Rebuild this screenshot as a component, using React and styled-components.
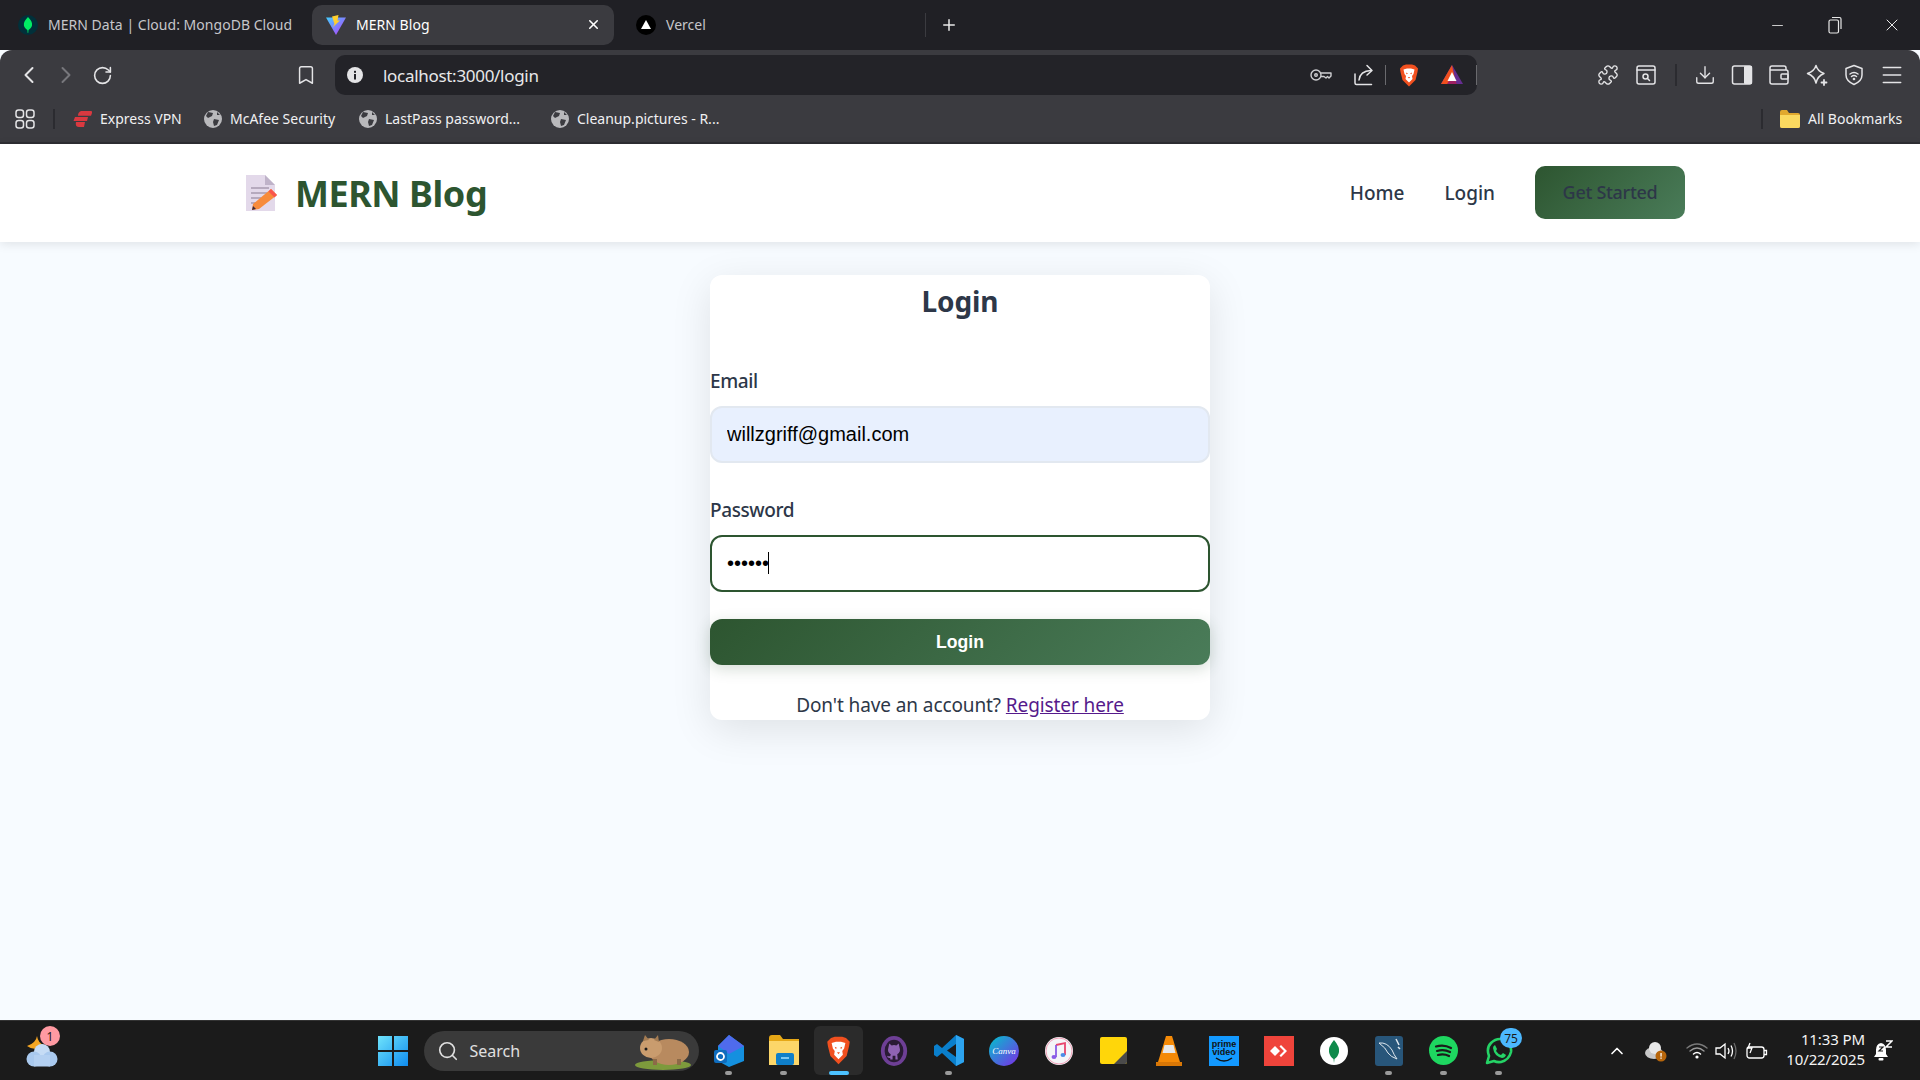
import React from "react";
import styled, { createGlobalStyle } from "styled-components";
import {
  ChevronLeft,
  ChevronRight,
  RotateCw,
  Bookmark,
  Puzzle,
  Download,
  Menu,
  X,
  Minus,
  Plus,
  ChevronUp,
  Search,
} from "lucide-react";

const GlobalStyle = createGlobalStyle`
  html, body {
    margin: 0;
    padding: 0;
    background: #f7fbff;
  }
  * { box-sizing: border-box; }
`;

const uiFont = `"Noto Sans", "Open Sans", sans-serif`;

const Screen = styled.div`
  display: flex;
  flex-direction: column;
  width: 1920px;
  height: 1080px;
  overflow: hidden;
  font-family: ${uiFont};
`;

/* browser chrome */
const TabStrip = styled.div`
  display: flex;
  align-items: center;
  height: 50px;
  padding-left: 18px;
  background: #202025;
`;

const Tab = styled.div`
  display: flex;
  align-items: center;
  gap: 10px;
  flex: none;
  width: ${(p) => p.$w}px;
  height: 40px;
  padding-left: ${(p) => p.$pl}px;
  padding-right: 13px;
  padding-bottom: 1px;
  border-radius: 10px;
  margin-left: ${(p) => p.$ml || 0}px;
  background: ${(p) => (p.$active ? "#3b3b40" : "transparent")};
  color: ${(p) => (p.$active ? "#ffffff" : "#c6c6ca")};
  font-size: 14px;
  letter-spacing: 0.03px;
  white-space: nowrap;

  & > svg {
    flex: none;
  }
`;

const TabTitle = styled.span`
  flex: 1;
`;

const TabDivider = styled.div`
  width: 1px;
  height: 24px;
  margin-left: ${(p) => p.$ml}px;
  background: #3b3b40;
`;

const WindowControls = styled.div`
  display: flex;
  margin-left: auto;
  color: #e8e8e8;
`;

const WindowBtn = styled.div`
  display: flex;
  align-items: center;
  justify-content: center;
  width: 57px;
  height: 50px;
`;

const ToolRow = styled.div`
  display: flex;
  align-items: center;
  height: 46px;
  padding: 4px 0 0 10px;
  background: #3b3b40;
  border-radius: 12px 12px 0 0;
  color: #e4e4e6;
`;

const ToolBtn = styled.div`
  display: flex;
  align-items: center;
  justify-content: center;
  flex: none;
  width: ${(p) => p.$w || 38}px;
  height: 40px;
  margin-left: ${(p) => p.$ml || 0}px;
  color: ${(p) => (p.$dim ? "#77777c" : "inherit")};
`;

const Omnibox = styled.div`
  display: flex;
  align-items: center;
  flex: none;
  width: 1142px;
  height: 40px;
  margin-left: 11px;
  padding-left: 10px;
  border-radius: 10px;
  background: #232328;
`;

const UrlText = styled.span`
  flex: 1;
  margin-left: 18px;
  color: #e8e8ea;
  font-size: 17px;
  letter-spacing: -0.3px;
`;

const ToolSep = styled.div`
  flex: none;
  width: ${(p) => p.$w || 1}px;
  height: ${(p) => p.$h || 20}px;
  margin-left: ${(p) => p.$ml}px;
  background: ${(p) => p.$c || "#6a6a6e"};
`;

const AppsBtn = styled(ToolBtn)`
  color: #e4e4e6;
`;

const BookmarksRow = styled.div`
  display: flex;
  align-items: center;
  height: 48px;
  padding-left: 10px;
  padding-bottom: 1px;
  background: #3b3b40;
  border-bottom: 2px solid #2e2e33;
`;

const BookmarkItem = styled.div`
  display: flex;
  align-items: center;
  gap: 8px;
  flex: none;
  width: ${(p) => p.$w}px;
  margin-left: ${(p) => p.$ml || 0}px;
  color: #f0f0f2;
  font-size: 14px;
  white-space: nowrap;

  & > svg {
    flex: none;
  }
`;

/* page */
const SiteNav = styled.header`
  position: relative;
  z-index: 1;
  display: flex;
  align-items: center;
  flex: none;
  height: 98px;
  padding: 0 235px 0 245px;
  background: #ffffff;
  box-shadow: 0 2px 10px rgba(0, 0, 0, 0.1);
`;

const Brand = styled.div`
  display: flex;
  align-items: center;
  gap: 17px;
  color: #2d5530;
  font-size: 36px;
  font-weight: 700;
  letter-spacing: -0.45px;
`;

const NavLinks = styled.nav`
  display: flex;
  align-items: center;
  gap: 40px;
  margin-left: auto;
`;

const NavLink = styled.a`
  color: #2d3748;
  font-size: 19px;
  font-weight: 500;
  letter-spacing: 0;
`;

const GetStarted = styled.div`
  display: flex;
  align-items: center;
  justify-content: center;
  width: 150px;
  height: 53px;
  margin-top: -2px;
  border-radius: 10px;
  background: linear-gradient(135deg, #2d5530, #4a7c59);
  color: #2d3748;
  font-size: 18px;
  font-weight: 500;
  letter-spacing: -0.3px;
`;

const Main = styled.main`
  display: flex;
  justify-content: center;
  align-items: flex-start;
  flex: 1;
  padding-top: 33px;
  background: #f7fbff;
`;

const LoginCard = styled.section`
  width: 500px;
  height: 445px;
  border-radius: 12px;
  background: #ffffff;
  box-shadow: 0 10px 40px rgba(0, 0, 0, 0.1);
  color: #2d3748;
`;

const CardTitle = styled.h2`
  height: 52px;
  margin: 0 0 41px;
  font-size: 28px;
  font-weight: 700;
  line-height: 52px;
  letter-spacing: -0.1px;
  text-align: center;
`;

const FieldLabel = styled.label`
  display: block;
  height: 26px;
  margin-bottom: 12px;
  font-size: 19px;
  font-weight: 500;
  line-height: 26px;
  letter-spacing: -0.4px;
`;

const InputWrap = styled.div`
  position: relative;
  margin-bottom: ${(p) => p.$mb}px;
`;

const TextInput = styled.input`
  display: block;
  width: 100%;
  height: 57px;
  padding: 0 15px;
  border-radius: 12px;
  border: 2px solid ${(p) => (p.$focused ? "#2d5530" : "#e2e8f0")};
  outline: none;
  background: ${(p) => (p.$filled ? "#e8f0fe" : "#ffffff")};
  color: #000000;
  font-family: "Liberation Sans", Arial, sans-serif;
  font-size: 20px;
`;

const Caret = styled.span`
  position: absolute;
  left: 58px;
  top: 17px;
  width: 1px;
  height: 22px;
  background: #000000;
`;

const SubmitBtn = styled.button`
  display: block;
  width: 100%;
  height: 46px;
  border: none;
  border-radius: 12px;
  background: linear-gradient(135deg, #2d5530, #4a7c59);
  box-shadow: 0 4px 15px rgba(45, 85, 48, 0.2);
  color: #ffffff;
  font-family: "Liberation Sans", Arial, sans-serif;
  font-size: 17.6px;
  font-weight: 700;
`;

const CardFooter = styled.p`
  height: 30px;
  margin: 25px 0 0;
  font-size: 19px;
  line-height: 30px;
  letter-spacing: -0.1px;
  text-align: center;
`;

const RegisterLink = styled.a`
  color: #551a8b;
  text-decoration: underline;
`;

/* windows taskbar */
const Taskbar = styled.footer`
  display: flex;
  align-items: center;
  flex: none;
  height: 60px;
  background: #1b1b1b;
  border-top: 1px solid #333333;
  color: #ffffff;
`;

const WeatherSlot = styled.div`
  position: relative;
  display: flex;
  align-items: center;
  justify-content: center;
  flex: none;
  width: 84px;
  height: 100%;
`;

const AppSlot = styled.div`
  position: relative;
  display: flex;
  align-items: center;
  justify-content: center;
  flex: none;
  width: 55px;
  height: 100%;
  margin-left: ${(p) => p.$ml || 0}px;

  ${(p) =>
    p.$active &&
    `&::before {
      content: "";
      position: absolute;
      left: 3px;
      right: 3px;
      top: 5px;
      bottom: 5px;
      border-radius: 6px;
      background: #2b2b2b;
    }`}

  & > svg {
    position: relative;
  }
`;

const RunDot = styled.span`
  position: absolute;
  left: 50%;
  bottom: 5px;
  width: ${(p) => (p.$active ? 20 : 7)}px;
  height: 4px;
  margin-left: ${(p) => (p.$active ? -10 : -3.5)}px;
  border-radius: 2px;
  background: ${(p) => (p.$active ? "#4cc2ff" : "#9a9a9a")};
`;

const Badge = styled.span`
  position: absolute;
  top: ${(p) => p.$top}px;
  left: ${(p) => p.$left}px;
  display: flex;
  align-items: center;
  justify-content: center;
  min-width: ${(p) => p.$w}px;
  height: 20px;
  border-radius: 10px;
  background: ${(p) => p.$bg};
  color: #1b1b1b;
  font-size: 12px;
`;

const SearchPill = styled.div`
  display: flex;
  align-items: center;
  flex: none;
  width: 275px;
  height: 40px;
  margin-left: 3px;
  padding: 0 6px 0 13px;
  border-radius: 20px;
  background: #3a3a3a;
  color: #e0e0e0;
  font-size: 16px;
`;

const SearchLabel = styled.span`
  flex: 1;
  margin-left: 11px;
`;

const Tray = styled.div`
  display: flex;
  align-items: center;
  flex: 1;
  height: 100%;
  padding-left: 76px;
  padding-right: 20px;
`;

const TrayIcon = styled.div`
  display: flex;
  align-items: center;
  justify-content: center;
  flex: none;
  width: ${(p) => p.$w || 30}px;
  height: 30px;
  margin-left: ${(p) => p.$ml || 0}px;
`;

const Clock = styled.div`
  flex: none;
  width: 90px;
  margin-left: 3px;
  margin-right: 3px;
  padding-bottom: 4px;
  color: #f4f4f4;
  font-size: 15px;
  line-height: 20px;
  letter-spacing: -0.1px;
  text-align: right;
  white-space: nowrap;
`;

/* drawings */
const MongoLeaf = ({ size = 20, bg = "#01303a", leaf = "#00ed64" }) => (
  <svg width={size} height={size} viewBox="0 0 20 20">
    <circle cx="10" cy="10" r="10" fill={bg} />
    <path d="M10 2c3 3 4.500 5.600 4 8.400-.4 2.400-2.400 3.600-3.500 4.600l-.3 3h-.5l-.3-3c-1.200-1-3.100-2.300-3.500-4.600C5.500 7.600 7 5 10 2z" fill={leaf} />
  </svg>
);

const ViteLogo = () => (
  <svg width="20" height="20" viewBox="0 0 20 20">
    <defs>
      <linearGradient id="viteA" x1="0" y1="0" x2="1" y2="1">
        <stop offset="0" stopColor="#41d1ff" />
        <stop offset="1" stopColor="#bd34fe" />
      </linearGradient>
    </defs>
    <path d="M0 2.500 L20 2.500 L10 20 Z" fill="url(#viteA)" />
    <path d="M12.500 0 L6 1.500 L8.500 9 L7 12 L14 5.500 L11.500 5.500 Z" fill="#ffcf2e" />
  </svg>
);

const VercelLogo = () => (
  <svg width="20" height="20" viewBox="0 0 20 20">
    <circle cx="10" cy="10" r="10" fill="#000" />
    <path d="M10 5 L15 14 H5 Z" fill="#fff" />
  </svg>
);

const BraveLogo = ({ size = 20 }) => (
  <svg width={size} height={size * 1.15} viewBox="0 0 20 23">
    <path d="M4 1.500 L7 0.500 H13 L16 1.500 L19 4.500 L18.500 8 L16.500 16 L10 22.500 L3.500 16 L1.500 8 L1 4.500 Z" fill="#f1501f" />
    <path d="M4.500 5.500 L8 4.500 H12 L15.500 5.500 L14.500 10 L13 12 L13.500 15 L10 18.500 L6.500 15 L7 12 L5.500 10 Z" fill="#ffffff" />
    <path d="M7 8.500 L9 9.500 L7.500 10.200 Z M13 8.500 L11 9.500 L12.500 10.200 Z M8.800 13 H11.200 L10 14.500 Z" fill="#f1501f" />
  </svg>
);

const RewardsTriangle = () => (
  <svg width="22" height="20" viewBox="0 0 22 20">
    <path d="M11 0 L22 19 H0 Z" fill="#662d91" />
    <path d="M11 0 L15 19 H0 Z" fill="#f1501f" />
    <path d="M11 7 L15.500 16 H6.500 Z" fill="#ffffff" />
    <path d="M6 19 L8 16 H14 L16 19 Z" fill="#9e1f63" />
  </svg>
);

const InfoDot = () => (
  <svg width="18" height="18" viewBox="0 0 18 18">
    <circle cx="9" cy="9" r="8" fill="#e4e4e6" />
    <rect x="8" y="8" width="2" height="5.500" fill="#232328" />
    <rect x="8" y="4.800" width="2" height="2" fill="#232328" />
  </svg>
);

const Outline = ({ size = 22, children }) => (
  <svg width={size} height={size} viewBox="0 0 22 22" fill="none" stroke="currentColor" strokeWidth="1.500" strokeLinecap="round" strokeLinejoin="round">
    {children}
  </svg>
);

const KeyIcon = () => (
  <svg width="22" height="14" viewBox="0 0 22 14" fill="none" stroke="#cfcfd2" strokeWidth="1.400" strokeLinejoin="round">
    <circle cx="6" cy="7" r="5" />
    <circle cx="6" cy="7" r="1.300" />
    <path d="M11 5 H21 V8 L19 10 L17.500 8.500 L16 10 L14 8.500 H11" />
  </svg>
);

const ShareIcon = () => (
  <Outline>
    <path d="M2 10 V19 Q2 20.500 3.500 20.500 H18.500" />
    <path d="M6 16 Q7 7 18 6.500" />
    <path d="M14 1.500 L19 6.500 L14 11" />
  </Outline>
);

const AppsGrid = () => (
  <Outline>
    <rect x="2" y="2" width="7.500" height="7.500" rx="2.500" />
    <rect x="12.500" y="2" width="7.500" height="7.500" rx="2.500" />
    <rect x="2" y="12.500" width="7.500" height="7.500" rx="2.500" />
    <rect x="12.500" y="12.500" width="7.500" height="7.500" rx="2.500" />
  </Outline>
);

const ExpressMark = () => (
  <svg width="19" height="16" viewBox="0 0 19 16">
    <path d="M8 0 H18 Q19.500 0 19 2 L18 4.800 H5 Q5 1 8 0 Z M2 6 H15 L14 10 H0.500 Z M3 11 H12 L11 16 H6 Q2 16 3 11 Z" fill="#da3940" />
  </svg>
);

const GlobeMark = () => (
  <svg width="18" height="18" viewBox="0 0 18 18">
    <circle cx="9" cy="9" r="9" fill="#b9b9bc" />
    <path d="M4 2 L9 3 L8 6 L4 8 L2 6 Z M10 9 L15 10 L13 15 L10 16 L9 12 Z M13 2 L16 5 L13 5 Z" fill="#3b3b40" />
  </svg>
);

const FolderMark = () => (
  <svg width="20" height="18" viewBox="0 0 20 18">
    <path d="M0 2 Q0 0 2 0 H7 L9 3 H18 Q20 3 20 5 V16 Q20 18 18 18 H2 Q0 18 0 16 Z" fill="#e0a82e" />
    <path d="M0 5 H20 V16 Q20 18 18 18 H2 Q0 18 0 16 Z" fill="#fad960" />
  </svg>
);

const ReaderIcon = () => (
  <Outline>
    <rect x="2" y="2" width="18" height="18" rx="2" />
    <path d="M2 6 H20" />
    <circle cx="10.500" cy="12.500" r="2.500" />
    <path d="M12.500 14.500 L14.500 16.500" />
  </Outline>
);

const SidebarIcon = () => (
  <svg width="22" height="22" viewBox="0 0 22 22">
    <rect x="1.500" y="2" width="19" height="18" rx="2" fill="none" stroke="currentColor" strokeWidth="1.500" />
    <rect x="13" y="2" width="8" height="18" rx="1" fill="currentColor" />
  </svg>
);

const WalletIcon = () => (
  <Outline>
    <path d="M18 6 V4 Q18 2 16 2 H4 Q2 2 2 4 V18 Q2 20 4 20 H18 Q20 20 20 18 V8 Q20 6 18 6 H2" />
    <rect x="13" y="10" width="7" height="5" rx="1" />
  </Outline>
);

const StarPlusIcon = () => (
  <Outline>
    <path d="M10 1.500 Q11.500 7 18 9.500 Q11.500 12 10 19 Q8.500 12 1.500 9.500 Q8.500 7 10 1.500 Z" />
    <path d="M18 16 V21 M15.500 18.500 H20.500" strokeWidth="1.800" />
  </Outline>
);

const VpnShield = () => (
  <Outline>
    <path d="M11 1.500 L19 4.500 V11 Q19 17 11 20.500 Q3 17 3 11 V4.500 Z" />
    <path d="M7 10 Q11 7 15 10 M8.500 12.500 Q11 10.500 13.500 12.500" />
    <circle cx="11" cy="15" r="0.600" />
  </Outline>
);

const RestoreIcon = () => (
  <svg width="14" height="18" viewBox="0 0 14 18" fill="none" stroke="currentColor" strokeWidth="1.200">
    <rect x="1" y="4" width="9.500" height="13" rx="1.500" />
    <path d="M4 1.500 H11.500 Q13 1.500 13 3 V13" />
  </svg>
);

const PageNote = () => (
  <svg width="33" height="36" viewBox="0 0 33 36">
    <path d="M1 0 H20 L30 10 V36 H1 Z" fill="#e3d9ea" />
    <path d="M20 0 L30 10 H20 Z" fill="#bfb3c9" />
    <path d="M6 13 H24 M6 18 H22 M6 23 H16 M6 28 H12" stroke="#a89bb0" strokeWidth="1.500" />
    <path d="M26 14 L32 20 L14 34 L7 35 L8 29 Z" fill="#f78b3b" />
    <path d="M26 14 L32 20 L29.500 22.500 L23.500 16.500 Z" fill="#f9554c" />
    <path d="M7 35 L8 31 L11 34 Z" fill="#3a2a3c" />
  </svg>
);

const WeatherIcon = () => (
  <svg width="32" height="36" viewBox="0 0 32 36">
    <path d="M11 3 Q10 10 1 13 Q9 19 18 12 Q12 10 11 3 Z" fill="#f5a623" />
    <circle cx="16" cy="19" r="8" fill="#c6dcf5" />
    <circle cx="8" cy="26" r="7.500" fill="#a9c9ee" />
    <circle cx="24" cy="26" r="7.500" fill="#a9c9ee" />
    <rect x="8" y="22" width="16" height="11.500" fill="#b4d0f1" />
  </svg>
);

const WindowsLogo = () => (
  <svg width="30" height="30" viewBox="0 0 30 30">
    <defs>
      <linearGradient id="winA" x1="0" y1="0" x2="1" y2="1">
        <stop offset="0" stopColor="#6fe3fb" />
        <stop offset="1" stopColor="#0f8cef" />
      </linearGradient>
    </defs>
    <path d="M0 0 H14 V14 H0 Z M16 0 H30 V14 H16 Z M0 16 H14 V30 H0 Z M16 16 H30 V30 H16 Z" fill="url(#winA)" />
  </svg>
);

const Wombat = () => (
  <svg width="60" height="38" viewBox="0 0 60 38">
    <ellipse cx="30" cy="33" rx="28" ry="5" fill="#7d9a3c" />
    <ellipse cx="36" cy="20" rx="20" ry="13" fill="#b88a5f" />
    <ellipse cx="18" cy="16" rx="11" ry="10" fill="#c99c6e" />
    <path d="M10 9 L12 3 L16 8 Z M21 8 L25 3 L26 10 Z" fill="#a37b52" />
    <circle cx="13" cy="17" r="1.500" fill="#1b1b1b" />
    <rect x="20" y="27" width="4" height="6" fill="#8c6a47" />
    <rect x="44" y="27" width="4" height="6" fill="#8c6a47" />
  </svg>
);

const OutlookIcon = () => (
  <svg width="30" height="32" viewBox="0 0 30 32">
    <path d="M15 0 L30 11 V26 L15 32 L4 26 V11 Z" fill="#1490df" />
    <path d="M15 0 L30 11 L15 19 L4 11 Z" fill="#4f6bed" />
    <rect x="0" y="15" width="13" height="13" rx="2" fill="#0f6cbd" />
    <circle cx="6.500" cy="21.500" r="3.500" fill="none" stroke="#fff" strokeWidth="1.800" />
  </svg>
);

const FilesIcon = () => (
  <svg width="30" height="32" viewBox="0 0 30 32">
    <path d="M0 3 Q0 0 3 0 H11 L14 4 H30 V30 H0 Z" fill="#e6a817" />
    <rect x="0" y="6" width="30" height="24" fill="#fcd669" />
    <rect x="7" y="18" width="18" height="12" rx="2" fill="#0f7fc9" />
    <rect x="12" y="22" width="8" height="2" fill="#7cc7f2" />
  </svg>
);

const GithubIcon = () => (
  <svg width="28" height="30" viewBox="0 0 28 32">
    <ellipse cx="14" cy="16" rx="14" ry="16" fill="#6e3f96" />
    <ellipse cx="14" cy="16" rx="10" ry="12" fill="#2a1b35" />
    <path d="M9 8 L11.500 10 Q14 9.400 16.500 10 L19 8 L20 12.500 Q21.500 17 17.500 19.500 L18 25 H15.500 V21 H12.500 V25 H10 V23.500 Q7 24 6.500 21 Q8.500 22 10 21.500 L10.500 19.500 Q6.500 17 8 12.500 Z" fill="#8f63b3" />
  </svg>
);

const VscodeIcon = () => (
  <svg width="30" height="31" viewBox="0 0 30 31">
    <path d="M22 0 L30 4 V27 L22 31 L8 18 L3 22 L0 20 V11 L3 9 L8 13 Z M22 9 L13 15.500 L22 22 Z" fill="#0a7fcc" />
    <path d="M22 0 L30 4 V27 L22 31 Z" fill="#2da4ef" />
  </svg>
);

const CanvaIcon = () => (
  <svg width="30" height="30" viewBox="0 0 30 30">
    <defs>
      <linearGradient id="canvaA" x1="0" y1="0" x2="1" y2="1">
        <stop offset="0" stopColor="#00c4cc" />
        <stop offset="1" stopColor="#7d2ae8" />
      </linearGradient>
    </defs>
    <circle cx="15" cy="15" r="15" fill="url(#canvaA)" />
    <text x="15" y="18" textAnchor="middle" fill="#fff" fontSize="9" fontStyle="italic" fontFamily="Liberation Serif, serif">Canva</text>
  </svg>
);

const MusicIcon = () => (
  <svg width="28" height="28" viewBox="0 0 28 28">
    <circle cx="14" cy="14" r="14" fill="#f5f5f7" />
    <circle cx="14" cy="14" r="13" fill="none" stroke="#f2a1b8" strokeWidth="1" />
    <path d="M11 8 L20 6 V18" fill="none" stroke="#e8476e" strokeWidth="1.800" />
    <path d="M11 8 V20" fill="none" stroke="#8a5ce6" strokeWidth="1.800" />
    <ellipse cx="9" cy="20" rx="2.500" ry="2" fill="#8a5ce6" />
    <ellipse cx="18" cy="18" rx="2.500" ry="2" fill="#4a8ee8" />
  </svg>
);

const StickyIcon = () => (
  <svg width="27" height="27" viewBox="0 0 27 27">
    <rect width="27" height="27" rx="2" fill="#ffd60a" />
    <path d="M27 14 L14 27 H25 Q27 27 27 25 Z" fill="#4a4a4a" />
  </svg>
);

const VlcIcon = () => (
  <svg width="26" height="30" viewBox="0 0 26 30">
    <path d="M10 0 H16 L24 26 H2 Z" fill="#f58a07" />
    <path d="M8.500 9 H17.500 L19.500 17 H6.500 Z" fill="#e8e8e8" />
    <path d="M0 26 H26 V30 H0 Z" fill="#d97706" />
  </svg>
);

const PrimeIcon = () => (
  <svg width="30" height="30" viewBox="0 0 30 30">
    <rect width="30" height="30" fill="#1399ff" />
    <text x="15" y="10.500" textAnchor="middle" fill="#111" fontSize="9" fontWeight="700" fontFamily="Liberation Sans, sans-serif">prime</text>
    <text x="15" y="19" textAnchor="middle" fill="#111" fontSize="9" fontWeight="700" fontFamily="Liberation Sans, sans-serif">video</text>
    <path d="M7 22 Q15 28 23 22" fill="none" stroke="#111" strokeWidth="1.500" />
  </svg>
);

const AnydeskIcon = () => (
  <svg width="30" height="30" viewBox="0 0 30 30">
    <rect width="30" height="30" fill="#ef443b" />
    <path d="M11 10 L16 15 L11 20 L6 15 Z" fill="#fff" />
    <path d="M17 9 L23 15 L17 21 L15.500 19.500 L20 15 L15.500 10.500 Z" fill="#fff" />
  </svg>
);

const MongoApp = () => (
  <svg width="28" height="28" viewBox="0 0 28 28">
    <circle cx="14" cy="14" r="14" fill="#ffffff" />
    <path d="M14 3 Q20 10 19 15 Q18 20 14.500 22 L14 26 L13.500 22 Q10 20 9 15 Q8 10 14 3 Z" fill="#0f8a4b" />
  </svg>
);

const MysqlIcon = () => (
  <svg width="28" height="30" viewBox="0 0 28 30">
    <rect width="28" height="30" rx="3" fill="#28567a" />
    <path d="M4 7 Q12 6 17 14 Q19 19 22 23 Q16 21 13 17 Q11 12 4 7 Z" fill="none" stroke="#dfe8ef" strokeWidth="1" />
    <path d="M21 3 L24 9 M23 11 L25 13" stroke="#dfe8ef" strokeWidth="1.500" />
  </svg>
);

const SpotifyIcon = () => (
  <svg width="29" height="29" viewBox="0 0 29 29">
    <circle cx="14.500" cy="14.500" r="14.500" fill="#1ed760" />
    <path d="M7 10.500 Q15 8 22 12 M8 15 Q15 13 21 16 M9 19 Q15 17.500 20 20" fill="none" stroke="#1b1b1b" strokeWidth="2.200" strokeLinecap="round" />
  </svg>
);

const WhatsappIcon = () => (
  <svg width="30" height="30" viewBox="0 0 30 30">
    <path d="M3 27 L5 20 Q2 12 7 7 Q13 1 21 4 Q28 8 27 16 Q25 24 17 26 Q13 26.500 10 25 Z" fill="none" stroke="#25d366" strokeWidth="2.600" strokeLinejoin="round" />
    <path d="M11 9 L13 13 L12 15 Q14 18 17 19 L19 17 L22 19 Q21 22 18 22 Q10 20 9 12 Q9 10 11 9 Z" fill="#25d366" />
  </svg>
);

const CloudWarn = () => (
  <svg width="24" height="22" viewBox="0 0 24 22">
    <ellipse cx="10" cy="13" rx="9" ry="6" fill="#c8c8c8" />
    <circle cx="11" cy="8" r="6" fill="#e8e8e8" />
    <circle cx="17" cy="16" r="5.500" fill="#b8660b" />
    <rect x="16.400" y="13" width="1.300" height="3.600" fill="#fff" />
    <rect x="16.400" y="17.500" width="1.300" height="1.300" fill="#fff" />
  </svg>
);

const WifiIcon = () => (
  <svg width="22" height="18" viewBox="0 0 22 18" fill="none" strokeLinecap="round">
    <path d="M1 6 Q11 -2 21 6" stroke="#7a7a7a" strokeWidth="1.300" />
    <path d="M4 9 Q11 3 18 9" stroke="#9a9a9a" strokeWidth="1.300" />
    <path d="M7.500 12 Q11 9 14.500 12" stroke="#ffffff" strokeWidth="1.500" />
    <circle cx="11" cy="15" r="1.600" fill="#ffffff" />
  </svg>
);

const VolumeIcon = () => (
  <svg width="22" height="20" viewBox="0 0 22 20" fill="none" stroke="#ffffff" strokeWidth="1.300">
    <path d="M1 7 H5 L10 3 V17 L5 13 H1 Z" />
    <path d="M13 7 Q15 10 13 13 M16 4.500 Q19 10 16 15.500" />
    <path d="M19 2 Q23 10 19 18" stroke="#6a6a6a" />
  </svg>
);

const BatteryIcon = () => (
  <svg width="22" height="18" viewBox="0 0 22 18" fill="none" stroke="#ffffff" strokeWidth="1.300">
    <rect x="1" y="5" width="17" height="11" rx="2.500" />
    <path d="M18 8.500 H20.500 V12.500 H18" />
    <path d="M4 1 L2 6 H6 L4 11" />
  </svg>
);

const BellIcon = () => (
  <svg width="20" height="22" viewBox="0 0 20 22">
    <path d="M8 3 Q3 4 3 10 V14 L1 17 H15 L13 14 V10 Q13 4 8 3 Z" fill="#ffffff" />
    <rect x="5.500" y="18" width="5" height="2.500" rx="1" fill="#ffffff" />
    <path d="M6 7 H10 L6 11 H10" fill="none" stroke="#1b1b1b" strokeWidth="1.200" />
    <path d="M13 1 H19 L13 7 H19" fill="none" stroke="#ffffff" strokeWidth="1.500" />
  </svg>
);

const BOOKMARKS = [
  { label: "Express VPN", w: 131, icon: <ExpressMark />, ml: 18 },
  { label: "McAfee Security", w: 155, icon: <GlobeMark /> },
  { label: "LastPass password...", w: 192, icon: <GlobeMark /> },
  { label: "Cleanup.pictures - R...", w: 190, icon: <GlobeMark /> },
];

const APPS = [
  { key: "outlook", icon: <OutlookIcon />, running: true, ml: 2.5 },
  { key: "files", icon: <FilesIcon />, running: true },
  { key: "brave", icon: <BraveLogo size={25} />, active: true },
  { key: "github", icon: <GithubIcon /> },
  { key: "vscode", icon: <VscodeIcon />, running: true },
  { key: "canva", icon: <CanvaIcon /> },
  { key: "music", icon: <MusicIcon /> },
  { key: "sticky", icon: <StickyIcon /> },
  { key: "vlc", icon: <VlcIcon /> },
  { key: "prime", icon: <PrimeIcon /> },
  { key: "anydesk", icon: <AnydeskIcon /> },
  { key: "mongo", icon: <MongoApp /> },
  { key: "mysql", icon: <MysqlIcon />, running: true },
  { key: "spotify", icon: <SpotifyIcon />, running: true },
  { key: "whatsapp", icon: <WhatsappIcon />, running: true, badge: "75" },
];

const App = () => {
  return (
    <Screen>
      <GlobalStyle />
      <TabStrip>
        <Tab $w={294} $pl={0}>
          <MongoLeaf />
          <TabTitle>MERN Data | Cloud: MongoDB Cloud</TabTitle>
        </Tab>
        <Tab $w={302} $pl={14} $active>
          <ViteLogo />
          <TabTitle>MERN Blog</TabTitle>
          <X size={15} strokeWidth={2.5} />
        </Tab>
        <Tab $w={110} $pl={15} $ml={7}>
          <VercelLogo />
          <TabTitle>Vercel</TabTitle>
        </Tab>
        <TabDivider $ml={194} />
        <ToolBtn $w={46}>
          <Plus size={18} color="#e8e8e8" />
        </ToolBtn>
        <WindowControls>
          <WindowBtn>
            <Minus size={17} strokeWidth={1.2} />
          </WindowBtn>
          <WindowBtn>
            <RestoreIcon />
          </WindowBtn>
          <WindowBtn>
            <X size={20} strokeWidth={1.2} />
          </WindowBtn>
        </WindowControls>
      </TabStrip>

      <ToolRow>
        <ToolBtn $w={37}>
          <ChevronLeft size={28} strokeWidth={1.7} />
        </ToolBtn>
        <ToolBtn $w={37} $dim>
          <ChevronRight size={28} strokeWidth={1.7} />
        </ToolBtn>
        <ToolBtn $w={37}>
          <RotateCw size={21} strokeWidth={1.8} />
        </ToolBtn>
        <ToolBtn $w={37} $ml={166}>
          <Bookmark size={22} strokeWidth={1.6} />
        </ToolBtn>
        <Omnibox>
          <ToolBtn $w={20}>
            <InfoDot />
          </ToolBtn>
          <UrlText>localhost:3000/login</UrlText>
          <ToolBtn $w={36}>
            <KeyIcon />
          </ToolBtn>
          <ToolBtn $w={36} $ml={7}>
            <ShareIcon />
          </ToolBtn>
          <ToolSep $ml={3} />
          <ToolBtn $w={36} $ml={5}>
            <BraveLogo size={20} />
          </ToolBtn>
          <ToolBtn $w={36} $ml={7}>
            <RewardsTriangle />
          </ToolBtn>
          <ToolSep $ml={6} $w={0} />
        </Omnibox>
        <ToolBtn $ml={112}>
          <Puzzle size={22} strokeWidth={1.5} />
        </ToolBtn>
        <ToolBtn>
          <ReaderIcon />
        </ToolBtn>
        <ToolSep $ml={10} $w={2} $h={22} $c="#2b2b30" />
        <ToolBtn $ml={9} $w={37.4}>
          <Download size={22} strokeWidth={1.5} />
        </ToolBtn>
        <ToolBtn $w={37.4}>
          <SidebarIcon />
        </ToolBtn>
        <ToolBtn $w={37.4}>
          <WalletIcon />
        </ToolBtn>
        <ToolBtn $w={37.4}>
          <StarPlusIcon />
        </ToolBtn>
        <ToolBtn $w={37.4}>
          <VpnShield />
        </ToolBtn>
        <ToolBtn $w={37.4}>
          <Menu size={26} strokeWidth={1.4} />
        </ToolBtn>
      </ToolRow>

      <BookmarksRow>
        <AppsBtn $w={30}>
          <AppsGrid />
        </AppsBtn>
        <ToolSep $ml={13} $w={2} $h={20} $c="#2b2b30" />
        {BOOKMARKS.map((item) => (
          <BookmarkItem key={item.label} $w={item.w} $ml={item.ml}>
            {item.icon}
            {item.label}
          </BookmarkItem>
        ))}
        <ToolSep $ml={1020} $w={2} $h={20} $c="#2b2b30" />
        <BookmarkItem $w={125} $ml={17}>
          <FolderMark />
          All Bookmarks
        </BookmarkItem>
      </BookmarksRow>

      <SiteNav>
        <Brand>
          <PageNote />
          MERN Blog
        </Brand>
        <NavLinks>
          <NavLink>Home</NavLink>
          <NavLink>Login</NavLink>
          <GetStarted>Get Started</GetStarted>
        </NavLinks>
      </SiteNav>

      <Main>
        <LoginCard>
          <CardTitle>Login</CardTitle>
          <FieldLabel>Email</FieldLabel>
          <InputWrap $mb={34}>
            <TextInput $filled type="email" value="willzgriff@gmail.com" readOnly />
          </InputWrap>
          <FieldLabel>Password</FieldLabel>
          <InputWrap $mb={27}>
            <TextInput $focused type="password" value="123456" readOnly />
            <Caret />
          </InputWrap>
          <SubmitBtn type="button">Login</SubmitBtn>
          <CardFooter>
            Don't have an account? <RegisterLink href="#">Register here</RegisterLink>
          </CardFooter>
        </LoginCard>
      </Main>

      <Taskbar>
        <WeatherSlot>
          <WeatherIcon />
          <Badge $top={5} $left={40} $w={20} $bg="#ff9aa2">1</Badge>
        </WeatherSlot>
        <AppSlot $ml={281.5}>
          <WindowsLogo />
        </AppSlot>
        <SearchPill>
          <Search size={22} strokeWidth={1.8} />
          <SearchLabel>Search</SearchLabel>
          <Wombat />
        </SearchPill>
        {APPS.map((app) => (
          <AppSlot key={app.key} $ml={app.ml} $active={app.active}>
            {app.icon}
            {app.badge && (
              <Badge $top={7} $left={29} $w={22} $bg="#4cb8ff">{app.badge}</Badge>
            )}
            {(app.running || app.active) && <RunDot $active={app.active} />}
          </AppSlot>
        ))}
        <Tray>
          <TrayIcon>
            <ChevronUp size={20} strokeWidth={2} />
          </TrayIcon>
          <TrayIcon $ml={9}>
            <CloudWarn />
          </TrayIcon>
          <TrayIcon $w={26} $ml={13}>
            <WifiIcon />
          </TrayIcon>
          <TrayIcon $w={26} $ml={3}>
            <VolumeIcon />
          </TrayIcon>
          <TrayIcon $ml={3}>
            <BatteryIcon />
          </TrayIcon>
          <Clock>
            <div>11:33 PM</div>
            <div>10/22/2025</div>
          </Clock>
          <TrayIcon>
            <BellIcon />
          </TrayIcon>
        </Tray>
      </Taskbar>
    </Screen>
  );
};

export default App;
